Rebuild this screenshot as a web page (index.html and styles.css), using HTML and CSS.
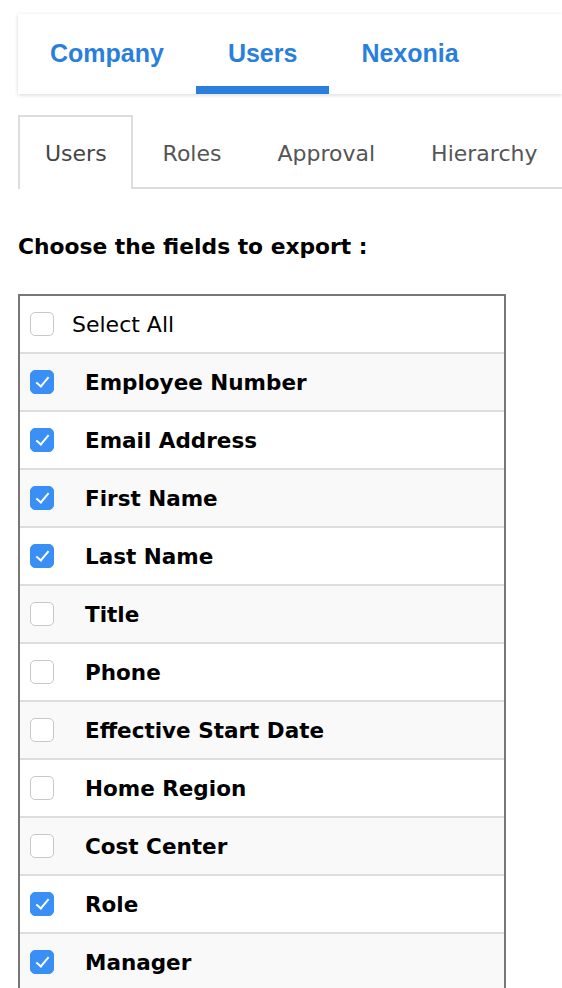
FILE: index.html
```html
<!DOCTYPE html>
<html>
<head>
<meta charset="utf-8">
<link rel="stylesheet" href="styles.css">
</head>
<body>
<div class="page">
  <nav class="topnav">
    <a class="toptab">Company</a>
    <a class="toptab active">Users</a>
    <a class="toptab">Nexonia</a>
  </nav>
  <div class="subtabs">
    <a class="subtab active">Users</a>
    <a class="subtab">Roles</a>
    <a class="subtab">Approval</a>
    <a class="subtab">Hierarchy</a>
  </div>
  <h2 class="heading">Choose the fields to export :</h2>
  <div class="fields">
    <label class="row all"><span class="cb"></span><span class="lbl">Select All</span></label>
    <label class="row alt"><span class="cb on"></span><span class="lbl">Employee Number</span></label>
    <label class="row"><span class="cb on"></span><span class="lbl">Email Address</span></label>
    <label class="row alt"><span class="cb on"></span><span class="lbl">First Name</span></label>
    <label class="row"><span class="cb on"></span><span class="lbl">Last Name</span></label>
    <label class="row alt"><span class="cb"></span><span class="lbl">Title</span></label>
    <label class="row"><span class="cb"></span><span class="lbl">Phone</span></label>
    <label class="row alt"><span class="cb"></span><span class="lbl">Effective Start Date</span></label>
    <label class="row"><span class="cb"></span><span class="lbl">Home Region</span></label>
    <label class="row alt"><span class="cb"></span><span class="lbl">Cost Center</span></label>
    <label class="row"><span class="cb on"></span><span class="lbl">Role</span></label>
    <label class="row alt"><span class="cb on"></span><span class="lbl">Manager</span></label>
  </div>
</div>
</body>
</html>
```

FILE: styles.css
```css
html, body {
  margin: 0;
  padding: 0;
  background: #fff;
  overflow: hidden;
  height: 988px;
}
body {
  font-family: "DejaVu Sans", Verdana, sans-serif;
  color: #000;
}
.page {
  padding: 14px 0 0 18px;
}
.topnav {
  display: flex;
  height: 80px;
  background: #fff;
  box-shadow: 0 1px 4px rgba(0, 0, 0, 0.16);
}
.toptab {
  display: flex;
  align-items: center;
  padding: 0 32px;
  padding-top: 6px;
  font-family: "Liberation Sans", Arial, sans-serif;
  font-size: 25px;
  font-weight: bold;
  color: #2a7fdc;
  border-bottom: 8px solid transparent;
  box-sizing: border-box;
  height: 80px;
}
.toptab.active {
  border-bottom-color: #2a7fdc;
}
.subtabs {
  display: flex;
  margin-top: 21px;
  height: 74px;
  border-bottom: 2px solid #ddd;
  box-sizing: border-box;
}
.subtab {
  display: flex;
  align-items: center;
  padding: 0 26px;
  font-size: 22px;
  color: #555;
  border: 2px solid transparent;
  border-bottom: none;
  margin-bottom: -2px;
}
.subtab.active {
  padding: 0 24px 0 25px;
  border-color: #ddd;
  background: #fff;
  color: #444;
}
.subtab.active + .subtab {
  margin-left: 2px;
}
.heading {
  margin: 45px 0 0;
  font-size: 21.8px;
  font-weight: bold;
  line-height: 26px;
}
.fields {
  margin-top: 34px;
  width: 488px;
  box-sizing: border-box;
  border: 2px solid #777;
  border-bottom: none;
}
.row {
  display: flex;
  align-items: center;
  height: 58px;
  box-sizing: border-box;
  border-bottom: 2px solid #ddd;
  padding-left: 10px;
  background: #fff;
}
.row.alt {
  background: #f9f9f9;
}
.cb {
  width: 24px;
  height: 24px;
  box-sizing: border-box;
  border: 1px solid #c8c8c8;
  border-radius: 5px;
  background: #fff;
  flex: none;
  position: relative;
}
.cb.on {
  background: #3a8ff7;
  border-color: #3a8ff7;
}
.cb.on::after {
  content: "";
  position: absolute;
  left: 8px;
  top: 3px;
  width: 5px;
  height: 11px;
  border: solid #fff;
  border-width: 0 2.5px 2.5px 0;
  transform: rotate(40deg);
}
.lbl {
  margin-left: 31px;
  font-size: 21.5px;
  font-weight: bold;
}
.row.all .lbl {
  margin-left: 18px;
  font-size: 22px;
  font-weight: normal;
}
```
